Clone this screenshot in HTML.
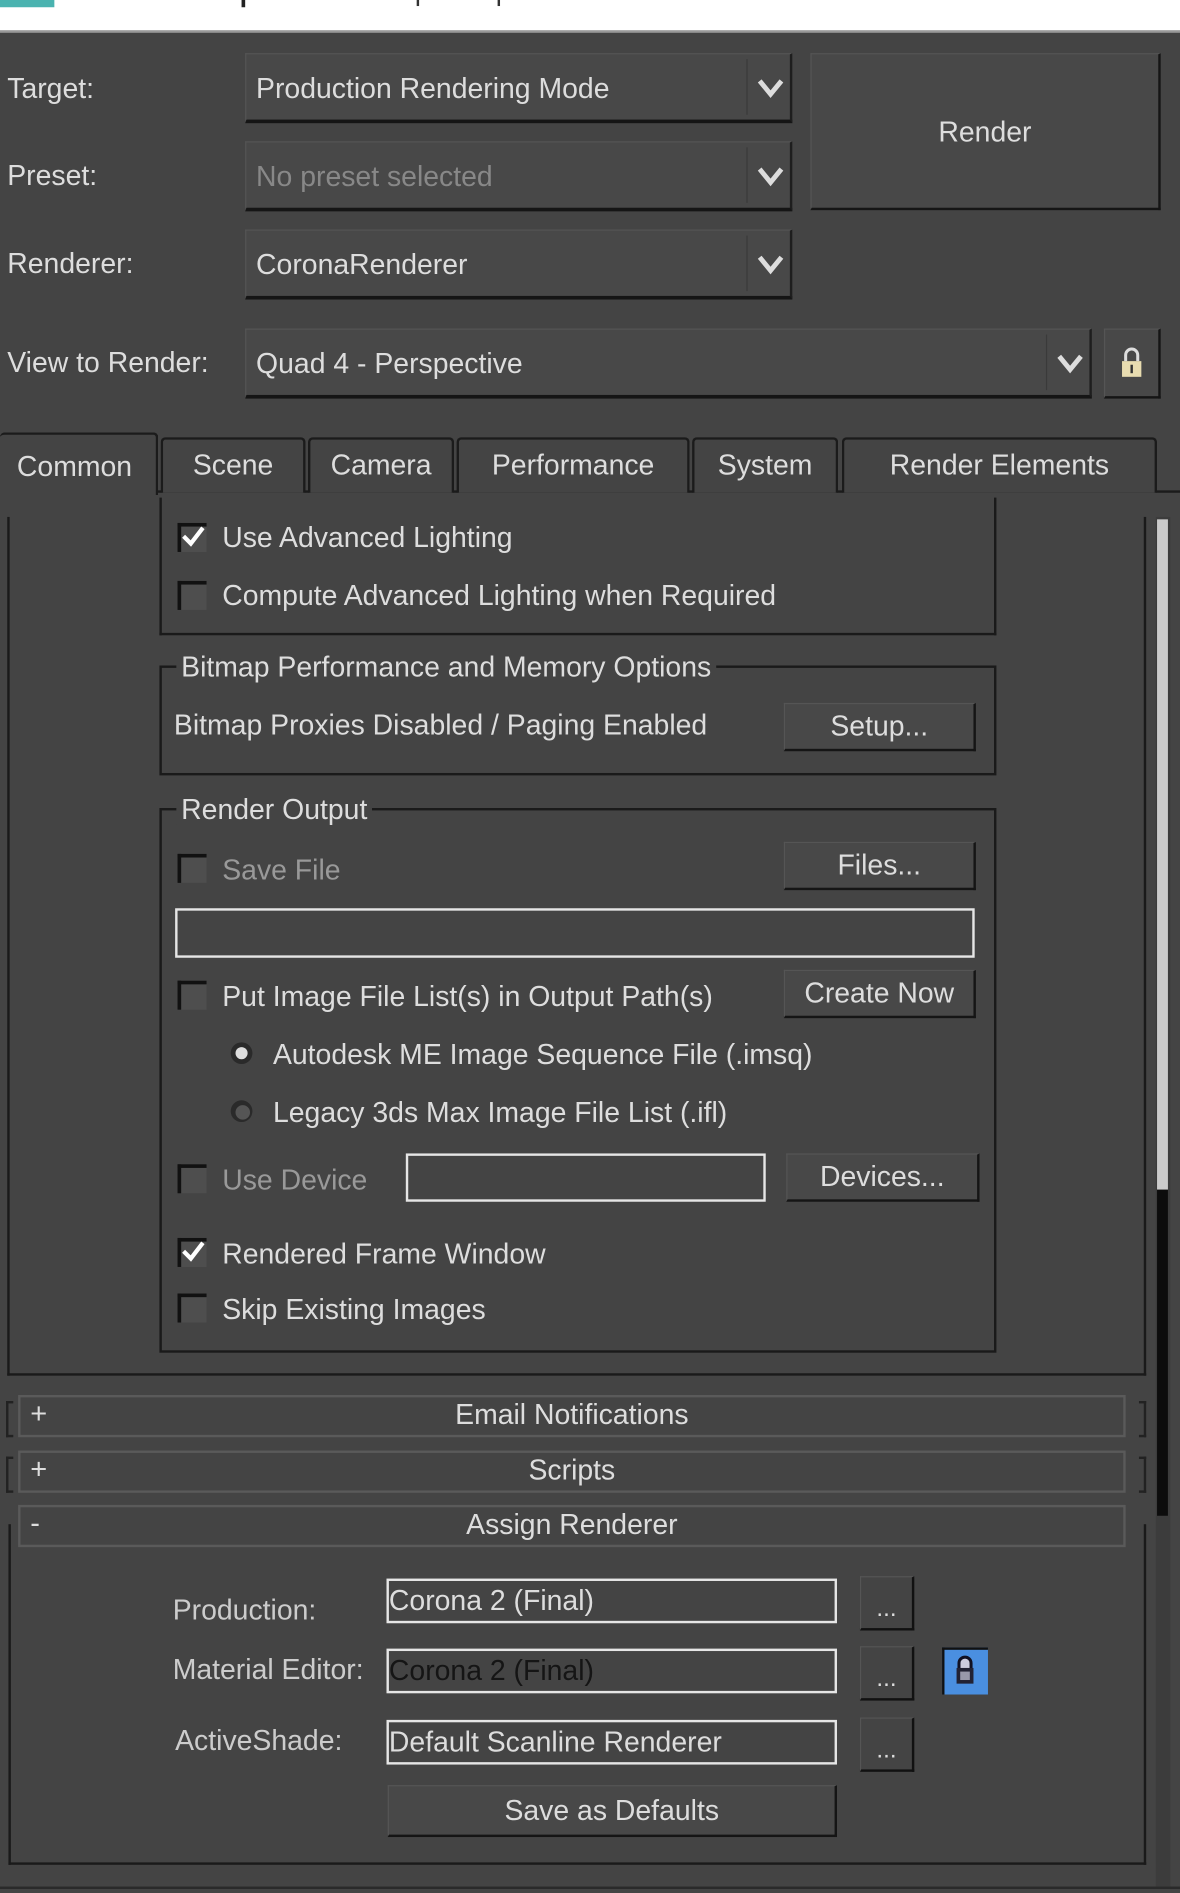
<!DOCTYPE html>
<html><head><meta charset="utf-8"><style>
html,body{margin:0;padding:0;background:#444;overflow:hidden}
body{width:1180px;height:1893px;position:relative}
#w{position:absolute;left:0;top:0;width:977px;height:1568px;transform:scale(1.20778);transform-origin:0 0;background:#444;font-family:"Liberation Sans",sans-serif;color:#ddd;font-size:23.5px}
.a{position:absolute;white-space:nowrap}
.lbl{position:absolute;left:6px;font-size:23.5px;color:#ddd;line-height:26px}
.dd{position:absolute;background:#484848;border-top:1px solid #555;border-left:1px solid #555;border-bottom:3px solid #151515;border-right:2px solid #1e1e1e;box-sizing:border-box}
.dd .t{position:absolute;left:8px;top:14px;font-size:23.5px;line-height:26px;color:#ddd;white-space:nowrap}
.dd .dv{position:absolute;top:4px;bottom:4px;width:1px;background:#3a3a3a}
.btn{position:absolute;background:#484848;border-top:1px solid #555;border-left:1px solid #555;border-bottom:2px solid #151515;border-right:2px solid #151515;box-sizing:border-box;text-align:center;color:#ddd;font-size:23.5px;white-space:nowrap}
.tab{position:absolute;top:362px;height:46px;background:#444;border:2px solid #1b1b1b;border-bottom:none;border-radius:4px 4px 0 0;box-sizing:border-box;text-align:center;line-height:42px;font-size:23.5px;color:#ddd}
.grp{position:absolute;border:2px solid #1a1a1a;box-sizing:border-box}
.gt{position:absolute;background:#444;padding:0 4px;font-size:23.5px;line-height:26px;white-space:nowrap}
.cb{position:absolute;width:24px;height:24px;background:#4e4e4e;border-top:3px solid #111;border-left:3px solid #111;box-sizing:border-box}
.ct{position:absolute;font-size:23.5px;line-height:26px;color:#ddd;white-space:nowrap}
.dim{color:#999}
.fld{position:absolute;border:2px solid #e6e6e6;box-sizing:border-box;background:#444;white-space:nowrap;overflow:hidden}
.rol{position:absolute;left:15px;width:917px;border:2px solid #5a5a5a;box-sizing:border-box;background:#444;text-align:center;font-size:23.5px;line-height:28px}
.rol .s{position:absolute;left:8px;top:0;font-size:24px}
.dots{position:absolute;width:45px;height:45px;background:#444;border-left:1px solid #555;border-top:1px solid #555;border-right:2px solid #111;border-bottom:2px solid #111;box-sizing:border-box;text-align:center;line-height:52px;font-size:20px}
</style></head><body><div id="w">
<div class="a" style="left:0;top:0;width:977px;height:25px;background:#fff;border-bottom:2px solid #999"></div>
<div class="a" style="left:0;top:0;width:45px;height:6px;background:#4ab3b0"></div>
<div class="a" style="left:200px;top:0;width:3px;height:6px;background:#222"></div>
<div class="a" style="left:345px;top:0;width:2px;height:5px;background:#333"></div>
<div class="a" style="left:412px;top:0;width:2px;height:5px;background:#333"></div>

<div class="lbl" style="top:60px">Target:</div>
<div class="lbl" style="top:132px">Preset:</div>
<div class="lbl" style="top:205px">Renderer:</div>
<div class="lbl" style="top:287px">View to Render:</div>

<div class="dd" style="left:203px;top:44px;width:453px;height:58px"><div class="t" style="top:15px">Production Rendering Mode</div><div class="dv" style="left:414px"></div><svg class="a" style="left:422px;top:18px" width="24" height="20"><path d="M3 4 L12 15 L21 4" stroke="#ddd" stroke-width="4" fill="none"/></svg></div>
<div class="dd" style="left:203px;top:117px;width:453px;height:58px"><div class="t" style="top:15px;color:#888">No preset selected</div><div class="dv" style="left:414px"></div><svg class="a" style="left:422px;top:18px" width="24" height="20"><path d="M3 4 L12 15 L21 4" stroke="#ddd" stroke-width="4" fill="none"/></svg></div>
<div class="dd" style="left:203px;top:190px;width:453px;height:58px"><div class="t" style="top:15px">CoronaRenderer</div><div class="dv" style="left:414px"></div><svg class="a" style="left:422px;top:18px" width="24" height="20"><path d="M3 4 L12 15 L21 4" stroke="#ddd" stroke-width="4" fill="none"/></svg></div>
<div class="dd" style="left:203px;top:272px;width:701px;height:58px"><div class="t" style="top:15px">Quad 4 - Perspective</div><div class="dv" style="left:662px"></div><svg class="a" style="left:670px;top:18px" width="24" height="20"><path d="M3 4 L12 15 L21 4" stroke="#ddd" stroke-width="4" fill="none"/></svg></div>
<div class="btn" style="left:914px;top:272px;width:47px;height:58px"><svg class="a" style="left:10px;top:14px" width="24" height="28"><path d="M7 12 V7 a5 5 0 0 1 10 0 V12" stroke="#ddd" stroke-width="2.5" fill="none"/><rect x="4" y="12" width="16" height="13" fill="#e8dcb0"/><rect x="11" y="15" width="2" height="7" fill="#333"/></svg></div>
<div class="btn" style="left:671px;top:44px;width:290px;height:130px;line-height:60px;padding-top:34px">Render</div>

<div class="a" style="left:0;top:406px;width:977px;height:2px;background:#1b1b1b"></div>
<div class="tab" style="left:0;top:358px;width:131px;height:52px;background:#444;border-left:none;z-index:2;line-height:52px;text-align:left;padding-left:14px">Common</div>
<div class="tab" style="left:133px;width:120px">Scene</div>
<div class="tab" style="left:255px;width:121px">Camera</div>
<div class="tab" style="left:378px;width:193px">Performance</div>
<div class="tab" style="left:573px;width:121px">System</div>
<div class="tab" style="left:697px;width:261px">Render Elements</div>

<div class="a" style="left:6px;top:428px;width:943px;height:711px;border-left:2px solid #1a1a1a;border-right:2px solid #1a1a1a;border-bottom:2px solid #1a1a1a;box-sizing:border-box"></div>
<div class="a" style="left:957px;top:428px;width:12px;height:1136px;background:#3c3c3c"></div>
<div class="a" style="left:958px;top:430px;width:9px;height:555px;background:#cbcbcb"></div>
<div class="a" style="left:958px;top:985px;width:9px;height:270px;background:#0c0c0c"></div>

<div class="grp" style="left:132px;top:412px;width:693px;height:114px;border-top:none"></div>
<div class="cb" style="left:147px;top:433px"></div><svg class="a" style="left:149px;top:433px" width="22" height="22"><path d="M3 11 L9 17 L19 4" stroke="#fff" stroke-width="3.5" fill="none"/></svg>
<div class="ct" style="left:184px;top:432px">Use Advanced Lighting</div>
<div class="cb" style="left:147px;top:481px"></div>
<div class="ct" style="left:184px;top:480px">Compute Advanced Lighting when Required</div>

<div class="grp" style="left:132px;top:551px;width:693px;height:91px"></div>
<div class="gt" style="left:146px;top:539px">Bitmap Performance and Memory Options</div>
<div class="ct" style="left:144px;top:587px">Bitmap Proxies Disabled / Paging Enabled</div>
<div class="btn" style="left:649px;top:582px;width:159px;height:40px;line-height:36px">Setup...</div>

<div class="grp" style="left:132px;top:669px;width:693px;height:451px"></div>
<div class="gt" style="left:146px;top:657px">Render Output</div>
<div class="cb" style="left:147px;top:707px"></div>
<div class="ct dim" style="left:184px;top:707px">Save File</div>
<div class="btn" style="left:649px;top:697px;width:159px;height:40px;line-height:36px">Files...</div>
<div class="fld" style="left:145px;top:752px;width:662px;height:41px"></div>
<div class="cb" style="left:147px;top:812px"></div>
<div class="ct" style="left:184px;top:812px">Put Image File List(s) in Output Path(s)</div>
<div class="btn" style="left:649px;top:803px;width:159px;height:40px;line-height:36px">Create Now</div>
<svg class="a" style="left:188px;top:860px" width="24" height="24"><circle cx="12" cy="12" r="9" fill="#2a2a2a"/><circle cx="12" cy="12" r="5" fill="#ddd"/></svg>
<div class="ct" style="left:226px;top:860px">Autodesk ME Image Sequence File (.imsq)</div>
<svg class="a" style="left:188px;top:908px" width="24" height="24"><circle cx="12" cy="12" r="9" fill="#2a2a2a"/><circle cx="13" cy="13" r="6" fill="#555"/></svg>
<div class="ct" style="left:226px;top:908px">Legacy 3ds Max Image File List (.ifl)</div>
<div class="cb" style="left:147px;top:964px"></div>
<div class="ct dim" style="left:184px;top:964px">Use Device</div>
<div class="fld" style="left:336px;top:955px;width:298px;height:40px"></div>
<div class="btn" style="left:651px;top:955px;width:160px;height:40px;line-height:36px">Devices...</div>
<div class="cb" style="left:147px;top:1025px"></div><svg class="a" style="left:149px;top:1025px" width="22" height="22"><path d="M3 11 L9 17 L19 4" stroke="#fff" stroke-width="3.5" fill="none"/></svg>
<div class="ct" style="left:184px;top:1025px">Rendered Frame Window</div>
<div class="cb" style="left:147px;top:1071px"></div>
<div class="ct" style="left:184px;top:1071px">Skip Existing Images</div>

<div class="a" style="left:5px;top:1160px;width:4px;height:26px;border:2px solid #222;border-right:none"></div>
<div class="a" style="left:943px;top:1160px;width:4px;height:26px;border:2px solid #222;border-left:none"></div>
<div class="rol" style="top:1155px;height:35px"><span class="s">+</span>Email Notifications</div>
<div class="a" style="left:5px;top:1206px;width:4px;height:26px;border:2px solid #222;border-right:none"></div>
<div class="a" style="left:943px;top:1206px;width:4px;height:26px;border:2px solid #222;border-left:none"></div>
<div class="rol" style="top:1201px;height:35px"><span class="s">+</span>Scripts</div>
<div class="a" style="left:7px;top:1262px;width:942px;height:282px;border:2px solid #1a1a1a;border-top:none;box-sizing:border-box"></div>
<div class="rol" style="top:1246px;height:35px"><span class="s">-</span>Assign Renderer</div>

<div class="ct" style="left:143px;top:1320px;color:#ccc">Production:</div>
<div class="ct" style="left:143px;top:1369px;color:#ccc">Material Editor:</div>
<div class="ct" style="left:145px;top:1428px;color:#ccc">ActiveShade:</div>
<div class="fld" style="left:320px;top:1307px;width:373px;height:37px;font-size:23.5px;line-height:32px;color:#ddd">Corona 2 (Final)</div>
<div class="fld" style="left:320px;top:1365px;width:373px;height:37px;font-size:23.5px;line-height:32px;color:#151515">Corona 2 (Final)</div>
<div class="fld" style="left:320px;top:1424px;width:373px;height:37px;font-size:23.5px;line-height:32px;color:#ddd">Default Scanline Renderer</div>
<div class="dots" style="left:712px;top:1305px">...</div>
<div class="dots" style="left:712px;top:1363px">...</div>
<div class="dots" style="left:712px;top:1422px">...</div>
<div class="a" style="left:780px;top:1364px;width:38px;height:39px;background:#4a8fe0;border-top:2px solid #111;border-left:2px solid #111;box-sizing:border-box"><svg style="position:absolute;left:7px;top:3px" width="20" height="30"><path d="M5 12 V8 a5 5 0 0 1 10 0 V12" stroke="#112" stroke-width="2.5" fill="#ccd"/><rect x="3" y="12" width="14" height="13" fill="#223" /><rect x="6" y="15" width="8" height="7" fill="#99a"/></svg></div>
<div class="btn" style="left:321px;top:1478px;width:372px;height:43px;line-height:40px">Save as Defaults</div>
<div class="a" style="left:0;top:1562px;width:977px;height:2px;background:#2a2a2a"></div>
</div></body></html>
